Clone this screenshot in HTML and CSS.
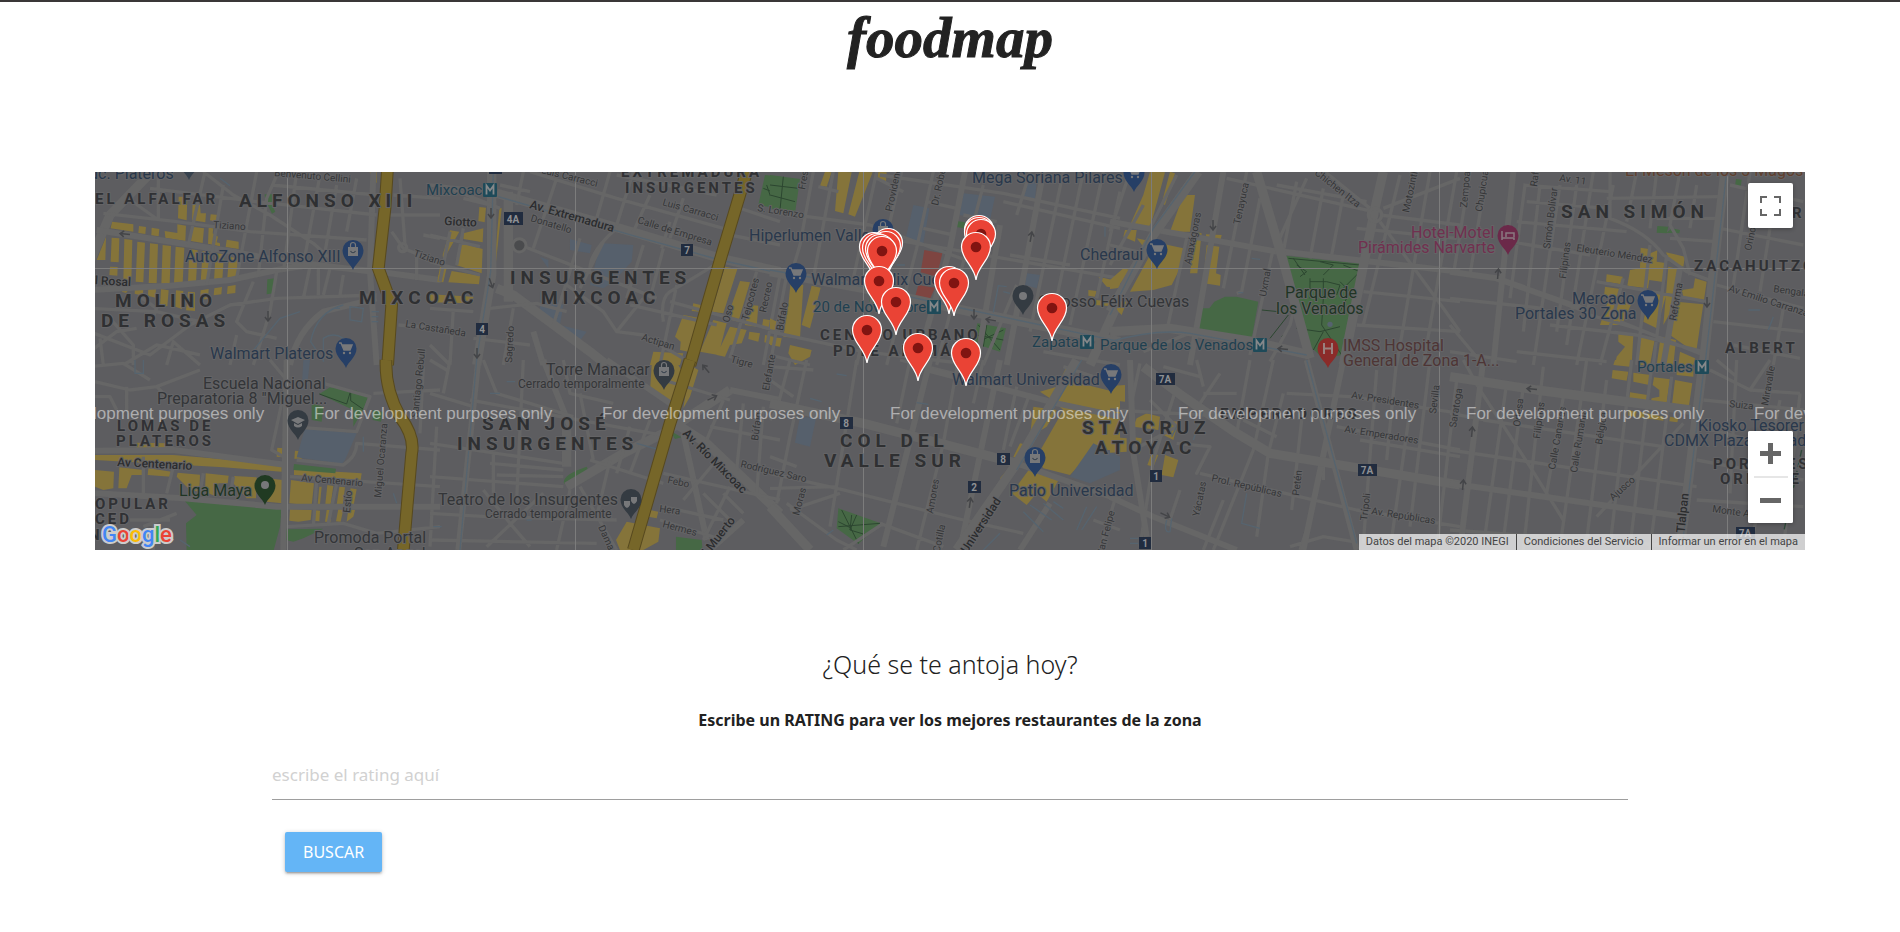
FILE: index.html
```html
<!DOCTYPE html>
<html lang="es">
<head>
<meta charset="utf-8">
<title>foodmap</title>
<link rel="stylesheet" href="styles.css">
</head>
<body>
<header class="site-header"><h1 class="logo">foodmap</h1></header>

<section class="map" aria-label="Mapa de restaurantes">
<svg class="map-canvas" viewBox="0 0 1710 378" preserveAspectRatio="xMidYMid slice">
<defs>
<path id="pin" d="M0 0C-2-6-10.500-11-10.500-19.500a10.500 10.500 0 0 1 21 0C10.500-11 2-6 0 0z"/>
<g id="cart"><path d="M-6-25h2l3 7h6l2-5h-10" fill="none" stroke="#77787a" stroke-width="1.500"/><path d="M-3-23h10l-2 5h-6z" fill="#77787a"/><circle cx="-1" cy="-15" r="1.200" fill="#77787a"/><circle cx="5" cy="-15" r="1.200" fill="#77787a"/></g>
<g id="bag"><path d="M-5-23h10v9h-10z" fill="#77787a"/><path d="M-2.500-23v-2a2.500 2.500 0 0 1 5 0v2" fill="none" stroke="#77787a" stroke-width="1.200"/><path d="M-2.500-19q2.500 3.500 5 0" fill="none" stroke="#37424e" stroke-width="1.200"/></g>
<g id="metro"><rect width="14" height="14" rx="1"/><path d="M3.500 11.500v-9l3.500 5 3.500-5v9" fill="none" stroke="#85888a" stroke-width="1.800"/></g>
<g id="arrow"><path d="M0-5V5M-3 1L0 5L3 1" fill="none" stroke="#444548" stroke-width="1.500"/></g>
<g id="marker"><path d="M0 0C-1.500-14-14.500-20-14.500-33a14.500 14.500 0 0 1 29 0C14.500-20 1.500-14 0 0z" fill="#ea4335" stroke="#fff" stroke-width="1.200"/><circle cy="-33" r="5.300" fill="#811411"/></g>
</defs>

<g transform="translate(-5 -7) scale(.33333)">
<path class="built" d="M66 170L130 178V200L62 190zM147 183l21 3-2 21-21-3zM185 188l23 4-2 22-22-3zM224 198l38 6v-26l26 4-2 46-60-10zM266 95h26l-2 71-26-6zM308 110l22 10 2 25h16l-2 27-40-6zM362 148l24 2-2 22-24-6zM305 185l37 5-4 44-35-6zM356 188l14 2-2 15 16 10-4 17 10 3v9l-36-8zM410 224l36 6v22l-39-6zM48 215l-2 70H20zM65 218l23 2-2 72-24-2zM103 222l24 3-3 123-24-3zM142 230l23 3-5 119-23-2zM180 235l24 3-4 117-24-1zM218 240l25 3-4 114-25-1zM257 245l26 3-5 107-26 1zM298 252l25 4-5 97-24 2zM338 258l24 4-6 88-24 2zM377 265l25 3-5 77-25 3zM417 275l27 5-4 55-28 3zM60 305l23 1-1 26-24-2zM95 368l23 4-10 12-12-4zM135 368l25 4-2 20-24-6zM175 368l23 4-2 26-22-6zM213 372l23 4-4 48-22-4zM258 376l22 2-4 54-20-7zM294 380l21 2v56l-27-2zM332 376l24-4-2 30-24 2zM373 370l23-4-2 22-23 3zM413 364l24-4-1 24-25 3zM838 20h22v35zM1045 330l8 0v22h-10z"/>
<path class="park" d="M524 88h22v32l10 20-10 6-10-21-10-15zM532 343l24-3-2 44-24 4z"/>
<path class="r3" d="M0 290L60 150 190 15"/>
<path class="r2" d="M20 195L440 262 560 285 850 320M0 375L240 362 420 345 560 315 660 300 850 318 1050 345M850 20l-10 300 20 280"/>
<path class="r1" d="M180 70L500 110 860 150M40 145L260 170 480 200 830 225M100 90L205 165M205 20v145M345 20l-50 220M400 60l-50 300M340 20L430 90 540 150 670 235 720 280M500 20L440 340M565 20L530 100 505 330M620 20L580 320M690 30L640 300M740 60L700 290M800 40L770 200M545 60L860 90M910 90L1050 100M900 150h150M905 200l35 50 110 45M930 40l15 200M1000 210l50 10M925 480l125 10M980 260v85M0 500L180 570 300 480 420 420 560 400 860 390M560 320L540 440 490 600M490 350L440 470 470 500 560 520M660 305L640 400M685 305v85M720 310L700 390M760 330L750 390M150 395L200 430 180 480M0 430L200 440 330 470M100 600L200 540 330 570M40 600L30 520M230 600L250 530 330 600M420 600L440 510M60 460l70 80 0 60M0 560l80-60 60-10"/>
<path class="r2" d="M600 600Q620 500 700 440L860 400"/>
<circle class="r1" cx="938" cy="248" r="12"/>
<path class="stream" d="M390 40l30 22M760 420q-80 20-98 110l40 60M700 590v-70q30-20 60 0v60M780 425l40 5-5 40-35-5zM845 440h22M845 455h20M845 470h20M730 430h20M470 580l100-120 60-20"/>
<path class="hwy-edge" d="M892 20L885 130 865 310 905 420 893 600"/><path class="hwy" d="M892 20L885 130 865 310 905 420 893 600"/>
</g>
<g transform="translate(-5 188) scale(.33333)">
<path class="built" d="M140 248l100 2-15 22h-85zM15 285h235l150 13 175 10v27l-175-13-385-22zM15 330l57 5-2 50-30 5-25-10zM88 322l72 8-2 15h-33l-15 40H85zM175 325l70 10-2 15-70-5zM263 338l67 6-2 51-28-5-40-40zM347 340l69 7-3 23h-28l-5 40-35-15zM433 348l67 4-2 63h-28l-40-45zM530 355l48 5v70l-48-5zM562 263l16 2v27l-18-2zM615 272l22 2-2 23-22-1zM612 328l203 12-3 20-200-15zM603 360l69 10-7 67-67-7zM688 380h7l-5 52h-7zM712 375l18 3-8 55-16-1zM748 380l17 2-7 54-18-2zM782 385l18 3-10 52-18-2zM600 447l65 3-3 30-37 5-27-3zM670 450l20 2-2 32-20-2zM710 450h15l-3 35h-17zM745 447l15 1-8 37-14-1zM775 448l20 2-5 20-20 15z"/>
<path class="water" d="M645 205L800 220 765 300 755 312 620 292zM640 0h20l-10 90h-15z"/>
<path class="park" d="M280 418L330 425 575 447 570 500 550 575H290L288 490 320 465zM688 102L720 82 800 92 835 108 820 148 790 200 790 150zM612 312l126 14-2 14-126-10zM665 130l35 10-5 45-30-5zM588 508l112-2-60 29-30 10-22-5zM848 150l30 5-5 30-25-5z"/>
<path class="trail" d="M688 102L770 132 782 92 835 108M782 92v30l38 26"/>
<path class="r1" d="M15 65L120 90 200 80 330 30M110 80v70M200 80l50 50M0 20L100 10 180 60M540 0L590 60 545 270 580 290M600 200L800 215 840 110 700 70M620 300L760 315Q800 290 800 250L1050 270M160 290v110M250 320L230 400M340 340L330 400M430 350L420 410M590 500L760 490 860 520 1050 500M680 360L670 500M600 350L1050 380M740 370L715 490M160 500L260 460M190 490v80M120 480h120M120 515l130 10M1040 200L1020 560M850 100l200-10M1000 20l-10 200M0 110h60l20 40"/>
<path class="r2" d="M0 272L250 270 590 315M15 400L280 415 560 440 1050 440M590 0L580 570"/>
<path class="stream" d="M135 0v40h25V0M820 230v45M270 540l30 20M910 400l10 30M90 520l40 10"/>
<path class="hwy-edge" d="M888 0Q885 90 930 170 975 230 965 280L940 570"/><path class="hwy" d="M888 0Q885 90 930 170 975 230 965 280L940 570"/>
</g>

<g transform="translate(335 -7) scale(.33333)">
<path class="water" d="M420 222l65 18-5 25-60-10zM520 235l90 5-5 50-55 60-30 20-40-10 20-80zM330 380l70 40-10 60 80 20-30 40-110-80zM330 275l25 10v25z"/>
<path class="built" d="M148 126l20 2-4 44-19-4zM208 130h7L195 320h-4zM60 196l28 4-48 85-2-15zM100 205l60-15-2 42-58-10zM95 235l63 17-3 73-77-25zM30 305l20 3-10 44-18-2zM65 318l85 14-3 26-92-6zM0 388l130 7-2 20L0 412zM885 305l37 7-42 133-35-5zM790 415l22 5-4 20-23-2zM760 450l45 8-30 102-25-5 2-25-17-15zM850 465l40 10-25 95-55-10zM930 348l30 4-35 118-20-5v-45zM960 420l25 2-5 63-35-5zM900 485l50 10-15 40-35 5-15 35-25-5zM958 500l32 5-5 25-30-8zM1000 462l50 8v30l-55-10zM1005 510l25 5-2 25-25-8zM670 560l90 5-10 35h-90z"/>
<path class="park" d="M1005 30l50 5v97l-70-12z"/>
<path class="trail" d="M1000 70l50 20M1010 60l20 60M1025 35v70"/>
<path class="r3" d="M185 20v310L140 600M200 370l50 20 230 170 50 40M200 85L620 205 870 280 1050 320M235 80v330"/>
<path class="r1" d="M0 60l140 15M0 210l150 35M0 290l150 40M60 200L30 350M100 190L80 300M210 60l90 20M280 20l-20 100M380 40L310 250M300 20L560 100 880 190M540 20L500 160M610 20L560 180M660 90L610 200M560 190Q480 260 480 310M270 240L450 310 680 400M180 430L320 415 410 440M450 220L370 480M520 230L450 370M640 240L590 400M700 250L660 400M870 290Q790 340 720 380 690 400 700 470M600 420L860 480M410 360L520 440 560 500 640 510 760 580M640 400L560 500M740 360L690 600M0 430l130 10M70 430L60 600M130 520l170 20M250 430L220 600M720 410L1050 500M980 320L900 580M1050 330L1000 600M900 120l150 50M0 540l60 60M720 170l-25 80M560 30l300 60M760 100l-40 120M1050 240l-150-30M60 70l150 60M100 100l80 20"/>
<path class="r2" d="M310 500l30 100"/>
<circle cx="268" cy="241" r="20" fill="#4a4b4d" stroke="#666" stroke-width="9"/>
<path class="stream" d="M190 20l-8 300-45 280M205 95L620 215 870 285 1050 325"/>
<path class="hwy-edge" d="M950 20L875 270 780 600"/><path class="hwy" d="M950 20L875 270 780 600"/>
</g>
<g transform="translate(335 188) scale(.33333)">
<path class="built" d="M665 15h80l20 35-35 90-70-45zM780 15l25 15-25 80-20 35zM590 485l100 20-5 40-45 25h-70l-12-30zM660 450l25 5-5 20-25-5z"/>
<path class="park" d="M402 370Q395 345 470 320 485 345 420 382zM738 530l77 10 3 32h-80zM720 212l35 20-20 5z"/>
<path class="r3" d="M410 380L580 280 700 220 900 90M720 180L830 250 1050 460M410 200v120"/>
<path class="r2" d="M145 0L85 570M340 0L420 200M530 0L720 130M760 220L830 540M940 480L840 570M900 90l150 30"/>
<path class="r1" d="M0 250L400 310M0 350L400 380M190 280v120M180 310L400 330M200 345L400 350M0 100L130 140M60 0L40 100M120 120L720 230M160 0L200 100 430 170M280 0L260 420M450 100L490 300M0 460L170 470 560 480M160 390L240 490 300 560M340 400L170 560M480 300L700 370M540 300L500 470M600 200L560 340M660 180L600 340M700 340L1050 420M700 440L880 480M690 480L880 540M880 120L830 240M940 130L920 330M1000 140L980 400M860 300L760 420M900 380L820 540M820 400L900 480M0 540L500 550M400 0l20 100 130 30M0 0l50 30M450 380l110 190M700 60l200 60M840 200l210 40M420 390l-40 180M880 400l60 60"/>
<path class="stream" d="M140 0L90 570M620 250l70 20M230 65h25M10 500h25M290 480h15M180 100h30"/>
<path class="hwy-edge" d="M780 0L720 190 610 570"/><path class="hwy" d="M780 0L720 190 610 570"/>
</g>

<g transform="translate(675 -7) scale(.33333)">
<path class="water" d="M580 85l95 10-15 70-92-15zM430 120l48 10-18 105-55-7zM772 45l28 5-5 55-35-10zM770 325l40 5-10 40-35-10z"/>
<path class="built" d="M165 20l20 2-15 43-20-3zM205 20l40 2-25 123-25-7zM268 20l40 2-53 133-20-7zM325 20l25 2-2 26-26-6zM62 350l38 10-10 160-50-5 15-95zM125 362l27 6-32 122-25-10zM0 460l20 10-5 25-15-3zM0 515l35 5-5 25-30-5zM60 540l65 15-5 20-45 25-20-35zM985 335l65 15v20l-40-5zM955 375l25 3-5 17-20-3zM975 405l75 5v15l-75-5z"/>
<path class="park" d="M0 30l90 12-15 103L0 130zM560 168l25 4-2 18-25-4zM622 475l86 15-18 70-80-25zM300 395l15 2-2 18-15-5z"/>
<path class="trail" d="M0 90l75 20M40 35l-10 100M0 60l85 10M625 480l65 75M700 495l-85 40M650 480l-10 65M620 510l80 15"/>
<path class="red-area" d="M463 255l54 10-17 70-48-13zM445 360l50 8-15 34-45-7z"/>
<path class="r1" d="M130 20L90 240 60 340M190 20L130 340M320 20L250 340M395 20L260 600M490 20L440 250 350 600M640 60L500 600M880 20L780 500M940 20L860 400M1000 20L900 480M1050 80L980 400M0 140L300 180 600 290M350 220L1050 340M330 30L700 85 1050 160M470 110l90 20M460 190l90 20M580 150l100 20M700 110L1050 190M720 270l180 30M0 500L280 560 620 600M145 65l60 15M320 40l80 40M50 330L0 600M740 360l-100 240M0 570l120 30M820 560l230 40M780 20l-40 130"/>
<path class="r2" d="M585 20L540 250 440 600M690 180L620 600M820 20L710 600"/>
<path class="r3" d="M0 320L280 370 600 440 1050 530M1050 400L960 600"/>
<path class="stream" d="M0 315L280 365 600 435 1050 530M710 365l-25-3-15 80M380 300h25M700 380l20 5M1005 185v30"/>
</g>
<g transform="translate(675 188) scale(.33333)">
<path class="water" d="M90 170l48 5-18 85-45-12z"/>
<path class="built" d="M810 95l50-15 30-60 15 5-15 35 160 40v170l-80 0-70 75-80-20-20-35 80-140-40-35zM790 140l70 10-30 50-50 30zM750 250l10 2-20 43-10-5zM690 355l30-35 8 5-28 40zM780 325l86 35-36 65-30-25-30 35-45-35 40-55z"/>
<path class="water" d="M970 250l80 40v40l-90 40-60-20z"/>
<path class="park" d="M205 445l127 45-67 62-65-47z"/>
<path class="trail" d="M215 450l50 100M205 500l125-10M240 510l50 15M245 465l-5 45 20-45M205 485l40 20"/>
<path class="red-area" d="M600 485l20 3-30 40z"/>
<path class="r1" d="M565 0L520 250 440 570M260 0L180 500M60 0L20 150 0 180M110 0L60 230 20 430M740 80L700 270M640 0L610 130M0 340L220 390 580 480 760 520M0 385l200-5M0 290l80 30M50 430L200 540 260 570M210 400L60 450M340 490L220 570M330 490L520 560M420 0l-40 190M130 30L0 20M390 0l240 60M0 60l70 50M780 100l-60 160M970 480l80 30M880 20l90 30M1040 400l-50 170"/>
<path class="r2" d="M480 0L340 560M690 0L570 570M480 30L860 130 1050 170M750 570L840 430M740 310L1050 420"/>
<path class="r3" d="M0 130L280 190 740 310M920 0L740 310 560 570M0 440L120 570"/>
<path class="stream" d="M935 0L740 330M200 42l30 5M120 115l35 10M440 128l35 5M620 175h25M640 570l50-50M780 435l65 45M760 455l60 60M820 430l60 50M850 425l30 20M950 440l-30 70M980 440l-45 70M170 525l20-15"/>
</g>

<g transform="translate(1015 -7) scale(.33333)">
<path class="built" d="M120 20l45 2-45 168-60-10 40-90zM180 20l15 5-30 95-10-5zM220 90h35l-15 110h-60zM45 195h35l-5 35-35-15zM80 220l140 30-5 50-30 60-55 15-70 5 60-110zM255 200l20 5-13 120h-22zM288 208l47 2-5 22-43-7zM290 240l38 5-10 80 14 5-2 32-48-7 3-65zM40 310l22 5-42 55-20 2v-27zM5 405l45 5-15 40-10-10z"/>
<path class="park" d="M265 430h33l15-20 32-15h35l65 15-20 112-175-27zM527 272l225 24-55 274-57 10-45-40-55-220z"/>
<path class="trail" d="M535 280l215 20M550 280l35 50M560 300l30 20-20 15M640 330l30-30-40-10M690 380l60-60M600 350h50l40 10-10 30M600 340v60M640 340v60l-5 80 60 90M700 300l50 20M690 350l30 30-30 60M560 490l70 10 60-15M640 500l-30 55M455 435l50 5M480 520l55-70M515 515l20-20"/>
<path class="r1" d="M560 50L520 260M640 70L600 280M700 90L665 270M410 20L340 370M450 100L395 380 380 385M490 250L420 570M870 30L760 480M960 20L860 600M1040 20L940 600M350 40L790 140M810 150L1050 180M820 130L1050 40M810 170L1000 430 1050 500M760 380l290 30M740 480l310 20M740 190l300 30M60 20L0 200M230 220L170 500M100 120L0 300M200 30l-80 160M480 590l60-110 10-40M0 240l80 20M100 560l150-60M500 60l270 50M590 40l-90 200M620 0l160 130"/>
<path class="r2" d="M0 170L500 260M520 260L1050 320M340 20L270 430 240 600"/>
<path class="r3" d="M440 20L520 290 600 580M265 20L130 210 0 440M820 20L795 130 700 600M0 500L180 490 430 530 600 570"/>
<circle class="r1" cx="795" cy="150" r="20" stroke-width="12"/>
<path class="stream" d="M255 20L130 190 0 450M0 530q140-40 240-25L430 540 590 570M425 280l25 3M385 383h15"/>
<circle cx="660" cy="478" r="8" fill="#56626f"/>
</g>
<g transform="translate(1015 188) scale(.33333)">
<path class="built" d="M0 78l45-3v50L0 120zM80 175l30-15 40 10-5 40-75-10zM0 190h30l-5 35-25 5zM150 180l55 5-15 55-40-20zM0 230l50 5v40L0 278zM125 280l20 5-15 35-18-5zM165 285l40 15-15 52-35-7zM60 230l35 5-5 47-30-12z"/>
<path class="r1" d="M420 0L380 220M430 270L310 570M520 100L475 280 440 530M575 180L545 450M800 30L760 550M860 0L830 300M900 150L840 570M960 0L900 500M1040 60L980 570M530 100L720 110 1050 160M680 200L1050 270M270 340L740 450 1050 500M0 150L380 170M200 80L130 300 90 560M490 0L430 270M300 260L260 340 300 260 200 250M540 560L640 530 730 545M280 80L260 0M750 240L1050 290M90 10L60 150M210 390l-30 90M280 100l100 0M270 130l60-90M400 180l100 50M640 320v40M160 20l110 30M600 480l-30 90M340 420l-60 150M120 120l80 80-130 70"/>
<path class="r2" d="M590 0L740 570M700 0L580 570M0 410L130 470 380 570M60 0L70 280 110 530"/>
<path class="r3" d="M100 20L220 110 380 220 480 280 1050 375"/>
<path class="stream" d="M590 0L740 550M410 400l-15 90 55 15M250 240l30-90M170 480q-10 40 10 35l5-40M60 535h25M60 550h25M185 230l20-40"/>
</g>

<g transform="translate(1355 -7) scale(.33333)">
<path class="built" d="M572 248l24 4-2 16 28-12-2 34 30 5-5 57-47-7-4 25-62-8 8-47 30-5zM648 262l57 13-5 30-40-15zM655 305l28 7-15 118-28 50zM470 328l48 7-3 23-47-8zM465 365l45 7-5 28-43-5zM475 405l70 10-30 65h-65zM735 340l35 10-8 55-62-10-5-20 35-5zM680 410l80 8-22 147-78-55zM505 505l45 5-5 90h-50l5-25 25-30-20-15zM570 515l45 5-15 80h-35zM632 515l46 10-8 75h-50zM690 560l45 20-5 20h-45zM600 375l50 10-30 105-40-20z"/>
<path class="park" d="M622 183l33 2-5 20-30-2zM858 42l17 2-3 22-17-2zM665 190l25 5-2 10-38-2z"/>
<path class="r1" d="M60 20L10 330M110 20L60 330M225 60L180 400M270 60L220 500M330 60L300 260 250 600M380 60L320 500M430 20L350 540M490 60L380 600M560 20L530 170M620 20L600 190M690 20L660 180 700 250 720 330M480 20v140Q590 200 640 270L710 320 790 350M200 170L530 200M220 60L480 80M470 100L810 95M230 110L470 130M440 350L770 410M180 230L420 270M300 480L560 510 760 560M810 190L1060 240M800 360L1060 430M790 470L1060 500M200 560L470 590M900 20L850 360M960 190L930 380M0 480L100 600M0 400L280 430M840 60L1060 110M510 470L760 570M600 240L560 600M650 270L610 600M520 340L450 600M740 60L720 190M620 160h190M660 220l140 10M420 450L560 490M850 540l200 40M1000 430l-30 170M0 560l200 30"/>
<path class="r2" d="M190 20L130 600M0 320L140 340 280 390 420 440M690 310L640 600"/>
<path class="r3" d="M825 20L790 320 760 600"/>
<path class="stream" d="M895 435h35M970 455l-15 40M830 20L765 600"/>
</g>
<g transform="translate(1355 188) scale(.33333)">
<path class="built" d="M495 0h50l-5 20-50-5zM488 30l47 5-5 27-45-7zM550 38l52 7-4 30-48-10zM612 52l48 6-12 84-48-7 5-20 23-5V90l-20-15zM675 60l52 10-12 80-50-8zM540 97l52 8-4 27-51-7zM570 155l70 15v12l-75-10zM680 20l50 5v25l-50-5zM535 150l25 5-3 15-22-3zM660 170l25 5-3 12-24-3z"/>
<path class="r1" d="M170 70L100 560M220 80L160 540M280 20L220 570M340 110L290 400M410 0L330 560M470 60L410 540M545 0L480 560M605 20L540 560M665 50L600 570M0 270L740 380M100 180L640 260M0 510L700 560M90 90L240 320 340 480M700 190L440 470M780 30L900 90 1050 100M760 120L1060 150M750 200L900 240M740 300L1060 360M740 420L1060 440M860 0L840 400M960 0L900 90M990 120L900 570M1050 100L1000 570M40 0l50 90M0 160l110 20M800 0l60 50"/>
<path class="r2" d="M100 0L30 570M0 370L700 470"/>
<path class="r3" d="M0 50L260 90 720 150M760 0L690 570"/>
<path class="stream" d="M765 0L695 570"/>
<path d="M1055 270l-55 250" fill="none" stroke="#2f4a3a" stroke-width="4" stroke-dasharray="20 12"/>
</g>

<path class="tile-lines" d="M0 96.500H1710M192.500 0V378M480.500 0V378M768.500 0V378M1056.500 0V378M1344.500 0V378M1632.500 0V378"/>

<use href="#arrow" transform="translate(30 62) rotate(95)"/><use href="#arrow" x="173" y="144"/><use href="#arrow" x="396" y="41"/><use href="#arrow" transform="translate(396 111) rotate(-20)"/><use href="#arrow" x="382" y="181"/><use href="#arrow" transform="translate(611 197) rotate(140)"/><use href="#arrow" transform="translate(617 226) rotate(-115)"/><use href="#arrow" transform="translate(936 65) rotate(190)"/><use href="#arrow" x="879" y="142"/><use href="#arrow" transform="translate(896 148) rotate(100)"/><use href="#arrow" transform="translate(875 331) rotate(188)"/><use href="#arrow" x="1118" y="53"/><use href="#arrow" transform="translate(1188 177) rotate(95)"/><use href="#arrow" transform="translate(1070 343) rotate(-65)"/><use href="#arrow" transform="translate(1403 102) rotate(185)"/><use href="#arrow" x="1612" y="130"/><use href="#arrow" transform="translate(1437 217) rotate(95)"/><use href="#arrow" transform="translate(1377 260) rotate(185)"/><use href="#arrow" transform="translate(1368 313) rotate(185)"/>

<g class="street">
<text transform="translate(179 4) rotate(5)">Benvenuto Cellini</text>
<text transform="translate(118 56) rotate(4)">Tiziano</text>
<text transform="translate(318 84) rotate(18)">Tiziano</text>
<text transform="translate(310 155) rotate(9)">La Castañeda</text>
<text transform="translate(206 309) rotate(5)">Av Centenario</text>
<text transform="translate(255 341) rotate(-85)">Estío</text>
<text transform="translate(286 326) rotate(-85)">Miguel Ocaranza</text>
<text transform="translate(323 246) rotate(-84)">Santiago Rebull</text>
<text transform="translate(446 1) rotate(14)">Luis Carracci</text>
<text transform="translate(435 49) rotate(17)">Donatello</text>
<text transform="translate(567 33) rotate(16)">Luis Carracci</text>
<text transform="translate(542 51) rotate(17)">Calle de Empresa</text>
<text transform="translate(662 39) rotate(9)">S. Lorenzo</text>
<text transform="translate(417 191) rotate(-87)">Sagredo</text>
<text transform="translate(546 168) rotate(17)">Actipan</text>
<text transform="translate(634 151) rotate(-75)">Oso</text>
<text transform="translate(653 149) rotate(-75)">Tejocotes</text>
<text transform="translate(671 141) rotate(-78)">Recreo</text>
<text transform="translate(688 159) rotate(-80)">Búfalo</text>
<text transform="translate(635 190) rotate(15)">Tigre</text>
<text transform="translate(572 311) rotate(12)">Febo</text>
<text transform="translate(564 340) rotate(7)">Hera</text>
<text transform="translate(567 355) rotate(15)">Hermes</text>
<text transform="translate(503 355) rotate(66)">Damas</text>
<text transform="translate(645 295) rotate(13)">Rodríguez Saro</text>
<text transform="translate(663 269) rotate(-82)">Búfalo</text>
<text transform="translate(674 219) rotate(-80)">Elefante</text>
<text transform="translate(710 18) rotate(-80)">Fresas</text>
<text transform="translate(797 40) rotate(-78)">Providencia</text>
<text transform="translate(843 34) rotate(-78)">Dr. Roberto</text>
<text transform="translate(704 344) rotate(-75)">Moras</text>
<text transform="translate(838 342) rotate(-80)">Amores</text>
<text transform="translate(843 388) rotate(-78)">z Cotilla</text>
<text transform="translate(1008 384) rotate(-75)">San Felipe</text>
<text transform="translate(1145 53) rotate(-78)">Tenayuca</text>
<text transform="translate(1096 93) rotate(-79)">Anaxágoras</text>
<text transform="translate(1171 125) rotate(-80)">Uxmal</text>
<text transform="translate(1219 2) rotate(38)">Chichen Itza</text>
<text transform="translate(1314 41) rotate(-78)">Motozintla</text>
<text transform="translate(1256 226) rotate(9)">Av. Presidentes</text>
<text transform="translate(1249 260) rotate(9)">Av. Emperadores</text>
<text transform="translate(1341 242) rotate(-83)">Sevilla</text>
<text transform="translate(1361 256) rotate(-81)">Saratoga</text>
<text transform="translate(1116 309) rotate(13)">Prol. Repúblicas</text>
<text transform="translate(1204 324) rotate(-83)">Petén</text>
<text transform="translate(1104 345) rotate(-78)">Yácatas</text>
<text transform="translate(1272 349) rotate(-83)">Trípoli</text>
<text transform="translate(1276 342) rotate(9)">Av. Repúblicas</text>
<text transform="translate(1372 36) rotate(-85)">Zempoala</text>
<text transform="translate(1387 40) rotate(-81)">Chupicuaro</text>
<text transform="translate(1442 15) rotate(-82)">Rafael</text>
<text transform="translate(1464 9) rotate(8)">Av. 11</text>
<text transform="translate(1455 77) rotate(-83)">Simón Bolívar</text>
<text transform="translate(1471 107) rotate(-83)">Filipinas</text>
<text transform="translate(1481 79) rotate(9)">Eleuterio Méndez</text>
<text transform="translate(1581 149) rotate(-80)">Reforma</text>
<text transform="translate(1633 119) rotate(18)">Av Emilio Carranza</text>
<text transform="translate(1678 120) rotate(8)">Bengala</text>
<text transform="translate(1656 79) rotate(-78)">Orinoco</text>
<text transform="translate(1673 234) rotate(-80)">Miravalle</text>
<text transform="translate(1634 235) rotate(6)">Suiza</text>
<text transform="translate(1425 255) rotate(-83)">Odesa</text>
<text transform="translate(1445 267) rotate(-83)">Filipinas</text>
<text transform="translate(1460 298) rotate(-80)">Calle Canarias</text>
<text transform="translate(1482 301) rotate(-81)">Calle Rumania</text>
<text transform="translate(1507 273) rotate(-81)">Bélgica</text>
<text transform="translate(1518 329) rotate(-42)">Ajusco</text>
<text transform="translate(1617 340) rotate(8)">Monte Albán</text>
</g>
<g class="avenue">
<text transform="translate(-7 112) rotate(3)">El Rosal</text>
<text transform="translate(22 294) rotate(3)">Av Centenario</text>
<text transform="translate(349 53) rotate(3)">Giotto</text>
<text transform="translate(434 36) rotate(16)">Av. Extremadura</text>
<text transform="translate(587 262) rotate(45)">Av. Río Mixcoac</text>
<text transform="translate(613 384) rotate(-52)">l Muerto</text>
<text transform="translate(872 382) rotate(-57)">Universidad</text>
<text transform="translate(1588 375) rotate(-84)">C. Tlalpan</text>
</g>
<g class="district">
<text x="144" y="35">ALFONSO XIII</text><text x="20" y="135">MOLINO</text><text x="6" y="155">DE ROSAS</text><text x="264" y="132">MIXCOAC</text>
<text x="415" y="112">INSURGENTES</text><text x="446" y="132">MIXCOAC</text><text x="387" y="258">SAN JOSÉ</text><text x="362" y="278">INSURGENTES</text>
<text x="745" y="275">COL DEL</text><text x="729" y="295">VALLE SUR</text><text x="987" y="262">STA CRUZ</text><text x="1000" y="282">ATOYAC</text><text x="1466" y="46">SAN SIMÓN</text>
</g>
<g class="quarter">
<text x="0" y="32">EL ALFALFAR</text><text x="22" y="259">LOMAS DE</text><text x="21" y="274">PLATEROS</text><text x="0" y="337">OPULAR</text><text x="0" y="352">CED</text><text x="-6" y="368">N</text>
<text x="526" y="5">EXTREMADURA</text><text x="530" y="21">INSURGENTES</text><text x="725" y="168">CENTRO URBANO</text><text x="738" y="184">PDTE ALEMÁN</text>
<text x="1125" y="247">EMPERADORES</text><text x="1599" y="99">ZACAHUITZCO</text><text x="1630" y="181">ALBERT</text><text x="1697" y="46">R</text><text x="1618" y="297">PORTALES</text><text x="1625" y="312">ORIENTE</text>
</g>
<g class="poi">
<text x="-14" y="7">Luc. Plateros</text><text x="90" y="90">AutoZone Alfonso XIII</text><text x="115" y="187">Walmart Plateros</text><text x="654" y="69">Hiperlumen Valle</text>
<text x="877" y="11">Mega Soriana Pilares</text><text x="716" y="113">Walmart Félix Cuevas</text><text x="985" y="88">Chedraui</text><text x="857" y="213">Walmart Universidad</text><text x="914" y="324">Patio Universidad</text>
<text x="1477" y="132">Mercado</text><text x="1420" y="147">Portales 30 Zona</text><text x="1603" y="259">Kiosko Tesorería</text><text x="1569" y="274">CDMX Plaza Ciudad</text>
</g>
<g class="poi poi-gray">
<text x="108" y="217">Escuela Nacional</text><text x="62" y="232">Preparatoria 8 "Miguel...</text><text x="219" y="371">Promoda Portal</text><text x="259" y="387">San Angel</text>
<text x="451" y="203">Torre Manacar</text><text x="343" y="333">Teatro de los Insurgentes</text><text x="943" y="135">Colosso Félix Cuevas</text>
</g>
<g class="poi-note"><text x="423" y="216">Cerrado temporalmente</text><text x="390" y="346">Cerrado temporalmente</text></g>
<g class="poi poi-green"><text x="84" y="324">Liga Maya</text><text x="1190" y="126">Parque de</text><text x="1181" y="142">los Venados</text></g>
<g class="poi poi-teal"><text x="331" y="23">Mixcoac</text><text x="718" y="140">20 de Noviembre</text><text x="937" y="175">Zapata</text><text x="1005" y="178">Parque de los Venados</text><text x="1542" y="200">Portales</text></g>
<g class="poi poi-pink"><text x="1316" y="66">Hotel-Motel</text><text x="1263" y="81">Pirámides Narvarte</text></g>
<g class="poi poi-red"><text x="1248" y="179">IMSS Hospital</text><text x="1248" y="194">General de Zona 1-A...</text></g>
<g class="poi poi-food"><text x="1530" y="4">El Meson de los 3 Magos</text></g>

<g fill="#1e4a59"><use href="#metro" x="388" y="11"/><use href="#metro" x="832" y="128"/><use href="#metro" x="985" y="163"/><use href="#metro" x="1158" y="166"/><use href="#metro" x="1600" y="188"/></g>
<g class="shield">
<path d="M409 40h19v13h-19zM586 72h12v12h-12zM381 151h12v12h-12zM394 -4h13v6h-13zM745 245h13v12h-13zM902 281h13v12h-13zM873 309h13v12h-13zM1061 201h19v12h-19zM1263 292h19v12h-19zM1055 298h12v12h-12zM1044 365h12v12h-12zM1641 355h19v12h-19z"/>
<text x="418" y="51">4A</text><text x="592" y="82">7</text><text x="387" y="161">4</text><text x="751" y="255">8</text><text x="908" y="291">8</text><text x="879" y="319">2</text><text x="1070" y="211">7A</text><text x="1272" y="302">7A</text><text x="1061" y="308">1</text><text x="1050" y="375">1</text><text x="1650" y="365">7A</text>
</g>

<g fill="#263f66"><use href="#pin" x="258" y="98"/><use href="#pin" x="251" y="196"/><use href="#pin" x="94" y="8" fill="#37424e"/><use href="#pin" x="701" y="121"/><use href="#pin" x="788" y="77"/><use href="#pin" x="1039" y="20"/><use href="#pin" x="1062" y="97"/><use href="#pin" x="1016" y="222"/><use href="#pin" x="940" y="305"/><use href="#pin" x="1553" y="148"/></g>
<use href="#bag" x="258" y="98"/><use href="#cart" x="250" y="196"/><use href="#cart" x="700" y="121"/><use href="#bag" x="788" y="77"/><use href="#cart" x="1038" y="20"/><use href="#cart" x="1061" y="97"/><use href="#cart" x="1015" y="222"/><use href="#bag" x="940" y="305"/><use href="#cart" x="1552" y="148"/>
<g fill="#343b42"><use href="#pin" x="203" y="268"/><use href="#pin" x="569" y="218"/><use href="#pin" x="536" y="347"/><use href="#pin" x="928" y="143"/></g>
<path d="M196 248l7-3 7 3-7 4zM199 251v3q4 3 8 0v-3l-4 2z" fill="#77787a"/><use href="#bag" x="569" y="218"/><path d="M529 329h6v4q-3 6-6 0zM536 325h6v4q-3 6-6 0z" fill="#77787a"/><circle cx="928" cy="124" r="4" fill="#77787a"/>
<use href="#pin" x="170" y="333" fill="#203a22"/><circle cx="170" cy="313" r="4" fill="#77787a"/>
<use href="#pin" x="1413" y="83" fill="#6b2949"/><path d="M1407 59v9M1407 66h12v2M1411 65v-4h8v4" fill="none" stroke="#8b7880" stroke-width="1.500"/>
<use href="#pin" x="1233" y="196" fill="#8b2b29"/><path d="M1229 171v11M1237 171v11M1229 176.500h8" fill="none" stroke="#99817f" stroke-width="2"/>

<g class="watermark">
<text x="-69" y="247">For development purposes only</text><text x="219" y="247">For development purposes only</text><text x="507" y="247">For development purposes only</text><text x="795" y="247">For development purposes only</text><text x="1083" y="247">For development purposes only</text><text x="1371" y="247">For development purposes only</text><text x="1659" y="247">For development purposes only</text>
</g>

<use href="#marker" x="793" y="104"/><use href="#marker" x="791" y="107"/><use href="#marker" x="779" y="108"/><use href="#marker" x="782" y="109"/><use href="#marker" x="785" y="110"/><use href="#marker" x="787" y="112"/>
<use href="#marker" x="884" y="91"/><use href="#marker" x="884" y="93"/><use href="#marker" x="886" y="95"/><use href="#marker" x="881" y="108"/>
<use href="#marker" x="784" y="142"/><use href="#marker" x="854" y="142"/><use href="#marker" x="859" y="144"/><use href="#marker" x="801" y="163"/><use href="#marker" x="957" y="169"/><use href="#marker" x="772" y="191"/><use href="#marker" x="823" y="209"/><use href="#marker" x="871" y="214"/>
</svg>

<a class="google" href="#"><span class="g-blue">G</span><span class="g-red">o</span><span class="g-yellow">o</span><span class="g-blue">g</span><span class="g-green">l</span><span class="g-red">e</span></a>
<button class="map-button fullscreen" type="button" aria-label="Pantalla completa"><svg width="21" height="20" viewBox="0 0 21 20"><path d="M1 7V1h6M14 1h6v6M20 13v6h-6M7 19H1v-6" fill="none" stroke="#666" stroke-width="2"/></svg></button>
<div class="zoom">
<button class="map-button" type="button" aria-label="Acercar"><svg width="21" height="21" viewBox="0 0 21 21"><path d="M0 10.500h21M10.500 0v21" stroke="#666" stroke-width="5"/></svg></button>
<button class="map-button" type="button" aria-label="Alejar"><svg width="21" height="21" viewBox="0 0 21 21"><path d="M0 10.500h21" stroke="#666" stroke-width="5"/></svg></button>
</div>
<div class="attribution"><span>Datos del mapa ©2020 INEGI</span><a href="#">Condiciones del Servicio</a><a href="#">Informar un error en el mapa</a></div>
</section>

<main class="search">
<h2 class="question">¿Qué se te antoja hoy?</h2>
<form class="form">
<label class="hint" for="rating">Escribe un RATING para ver los mejores restaurantes de la zona</label>
<input class="rating" id="rating" type="text" placeholder="escribe el rating aquí">
<button class="submit" type="button">BUSCAR</button>
</form>
</main>
</body>
</html>
```
FILE: styles.css
```css
* { box-sizing: border-box; }
body { margin: 0; background: #fff; color: #212121; font-family: "Noto Sans", sans-serif; font-size: 15px; border-top: 2px solid #3a3738; }

.site-header { height: 170px; padding-top: 4px; text-align: center; }
.logo { margin: 0; font: italic 700 57px/64px "Liberation Serif", serif; color: #222; -webkit-text-stroke: 1px #222; }

.map { position: relative; width: 90%; height: 378px; margin: 0 auto; overflow: hidden; background: #5d5d60; font-family: Roboto, sans-serif; }
.map-canvas { display: block; width: 100%; height: 100%; }

.built { fill: #85743a; }
.park { fill: #466845; }
.water { fill: #56606c; }
.red-area { fill: #7e4541; }
.trail { fill: none; stroke: #2c4630; stroke-width: 3; }
.r1, .r2, .r3 { fill: none; stroke: #666; stroke-width: 10; stroke-linejoin: round; }
.r2 { stroke-width: 18; }
.r3 { stroke-width: 28; }
.stream { fill: none; stroke: #56646f; stroke-width: 4; }
.hwy-edge { fill: none; stroke: #57491f; stroke-width: 38; }
.hwy { fill: none; stroke: #766629; stroke-width: 32; }
.tile-lines { fill: none; stroke: #7c7c7c; stroke-width: 1; }

.street, .avenue, .district, .quarter, .poi, .poi-note { paint-order: stroke; stroke: #646466; stroke-width: 2px; stroke-linejoin: round; fill: #353638; }
.street { font-size: 10px; }
.avenue { font-size: 12px; font-weight: 500; fill: #2b2c2e; }
.district { font-size: 19px; font-weight: 700; letter-spacing: 5px; fill: #2f3032; }
.quarter { font-size: 15px; font-weight: 700; letter-spacing: 3px; fill: #303134; }
.poi { font-size: 16px; fill: #29384c; }
.poi-note { font-size: 12px; }
.poi-gray { fill: #333538; }
.poi-green { fill: #1f3524; }
.poi-teal { font-size: 15px; fill: #1f4050; }
.poi-pink { fill: #71304f; }
.poi-red { fill: #4e3535; }
.poi-food { fill: #60402f; }
.shield { fill: #212c3f; font-size: 10px; font-weight: 700; text-anchor: middle; }
.shield text { fill: #8f9194; }
.watermark { fill: #fff; fill-opacity: .5; font-family: "Liberation Sans", sans-serif; font-size: 17px; }

.google { position: absolute; left: 7px; bottom: 1px; font-size: 22px; line-height: 28px; font-weight: 500; text-decoration: none; -webkit-text-stroke: 4px #ccc; paint-order: stroke; }
.g-blue { color: #4285f4; }
.g-red { color: #ea4335; }
.g-yellow { color: #fbbc05; }
.g-green { color: #34a853; }

.map-button { display: grid; place-items: center; width: 45px; height: 45px; padding: 0; border: 0; border-radius: 2px; background: #fff; }
.fullscreen { position: absolute; top: 11px; right: 12px; box-shadow: 0 1px 4px rgba(0, 0, 0, .3); }
.zoom { position: absolute; right: 12px; bottom: 27px; border-radius: 2px; background: #fff; box-shadow: 0 1px 4px rgba(0, 0, 0, .3); }
.zoom .map-button + .map-button::before { content: ""; position: absolute; top: 45px; width: 34px; height: 2px; background: #e6e6e6; }
.zoom .map-button + .map-button { margin-top: 2px; }

.attribution { position: absolute; right: 0; bottom: 0; display: flex; background: rgba(245, 245, 245, .75); font-size: 11px; line-height: 16px; color: #444; }
.attribution > * { padding: 0 7px; color: #444; text-decoration: none; }
.attribution > * + * { border-left: 1px solid #444; }

.search { width: 72%; max-width: 1356px; margin: 0 auto; padding-top: 98px; }
.question { margin: 0 0 20px; font-size: 25px; line-height: 32px; font-weight: 300; text-align: center; }
.form { display: flex; flex-direction: column; align-items: stretch; }
.hint { font-size: 16px; line-height: 40px; font-weight: 700; text-align: center; }
.rating { height: 45px; margin: 15px 0 32px; padding: 0 0 5px; border: 0; border-bottom: 1px solid #9e9e9e; outline: 0; background: transparent; font: 17px "Noto Sans", sans-serif; color: #212121; }
.rating::placeholder { color: #d1d1d1; opacity: 1; }
.submit { align-self: flex-start; height: 40px; margin: 0 13px 24px; padding: 0 18px; border: 0; border-radius: 2px; background: #64b5f6; color: #fff; font: 16px "Noto Sans", sans-serif; box-shadow: 0 2px 2px rgba(0, 0, 0, .14), 0 3px 1px -2px rgba(0, 0, 0, .12), 0 1px 5px rgba(0, 0, 0, .2); }
```
